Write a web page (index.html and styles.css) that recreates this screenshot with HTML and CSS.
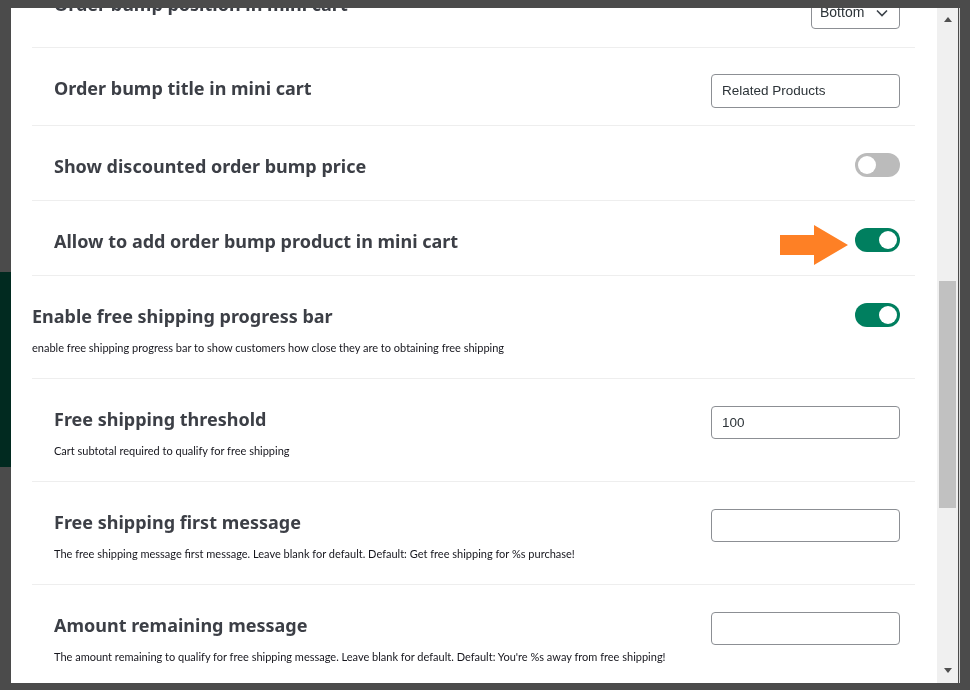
FILE: index.html
```html
<!DOCTYPE html>
<html lang="en">
<head>
<meta charset="utf-8">
<title>Mini cart settings</title>
<link rel="stylesheet" href="styles.css">
</head>
<body>
<div class="modal">
  <div class="modal-body">
    <div class="settings">
      <div class="row row--first">
        <div class="label"><div class="title">Order bump position in mini cart</div></div>
        <div class="control">
          <div class="select">Bottom
            <svg class="chev" width="12" height="8" viewBox="0 0 12 8"><path d="M1 1.5 L6 6.5 L11 1.5" fill="none" stroke="#3c434a" stroke-width="1.6"/></svg>
          </div>
        </div>
      </div>
      <div class="row row--input">
        <div class="label"><div class="title">Order bump title in mini cart</div></div>
        <div class="control"><div class="input input--tall">Related Products</div></div>
      </div>
      <div class="row">
        <div class="label"><div class="title">Show discounted order bump price</div></div>
        <div class="control"><span class="toggle"><span class="knob"></span></span></div>
      </div>
      <div class="row">
        <div class="label"><div class="title">Allow to add order bump product in mini cart</div></div>
        <div class="control">
          <svg class="arrow" width="68" height="40" viewBox="0 0 68 40"><polygon points="0,10 34,10 34,0 68,20 34,40 34,30 0,30" fill="#fe8025"/></svg>
          <span class="toggle toggle--on"><span class="knob"></span></span>
        </div>
      </div>
      <div class="row row--parent">
        <div class="label">
          <div class="title">Enable free shipping progress bar</div>
          <div class="desc">enable free shipping progress bar to show customers how close they are to obtaining free shipping</div>
        </div>
        <div class="control"><span class="toggle toggle--on"><span class="knob"></span></span></div>
      </div>
      <div class="row">
        <div class="label">
          <div class="title">Free shipping threshold</div>
          <div class="desc">Cart subtotal required to qualify for free shipping</div>
        </div>
        <div class="control"><div class="input">100</div></div>
      </div>
      <div class="row">
        <div class="label">
          <div class="title">Free shipping first message</div>
          <div class="desc">The free shipping message first message. Leave blank for default. Default: Get free shipping for %s purchase!</div>
        </div>
        <div class="control"><div class="input"></div></div>
      </div>
      <div class="row">
        <div class="label">
          <div class="title">Amount remaining message</div>
          <div class="desc">The amount remaining to qualify for free shipping message. Leave blank for default. Default: You're %s away from free shipping!</div>
        </div>
        <div class="control"><div class="input"></div></div>
      </div>
    </div>
  </div>
  <div class="scrollbar">
    <span class="sb-up"></span>
    <span class="sb-thumb"></span>
    <span class="sb-down"></span>
  </div>
</div>
</body>
</html>
```
FILE: styles.css
```css
* { box-sizing: border-box; }
html, body { margin: 0; height: 100%; }
body {
  background: linear-gradient(#012a20, #012a20) 0 272px / 11px 195px no-repeat, #4b4b4b;
  overflow: hidden;
  font-family: "Liberation Sans", Arial, sans-serif;
}
.modal {
  position: fixed;
  left: 11px;
  top: 8px;
  width: 947px;
  height: 675px;
  background: #fff;
  display: flex;
  box-shadow: 1px 0 0 #4b4b4b, 2px 0 0 #d8d8d8;
}
.modal-body {
  flex: 1;
  overflow: hidden;
  padding: 0 22px 0 21px;
}
.settings { margin-top: -44px; }
.row {
  display: flex;
  justify-content: space-between;
  align-items: flex-start;
  padding: 28px 15px 22px 22px;
  border-bottom: 1px solid #eeeeee;
}
.row--first { padding-bottom: 31px; }
.row--input { padding-bottom: 25px; }
.row--parent { padding-left: 0; }
.title {
  font-family: "Noto Sans", "Open Sans", sans-serif;
  font-size: 18px;
  line-height: 24px;
  font-weight: bold;
  color: #3c3f46;
}
.desc {
  margin-top: 12px;
  font-family: Lato, "Liberation Sans", sans-serif;
  font-size: 11px;
  line-height: 16px;
  color: #16161d;
}
.control {
  height: 24px;
  display: flex;
  align-items: flex-start;
  gap: 7px;
}
.toggle {
  margin-top: -1px;
  width: 45px;
  height: 24px;
  border-radius: 12px;
  background: #bbbbbb;
  display: flex;
  align-items: center;
  padding: 0 3px;
}
.toggle--on { background: #007f5f; justify-content: flex-end; }
.knob { width: 18px; height: 18px; border-radius: 50%; background: #fff; }
.arrow { margin-top: -4px; }
.input {
  margin-top: -1px;
  width: 189px;
  height: 33px;
  border: 1px solid #8c8f94;
  border-radius: 4px;
  padding: 0 10px;
  font-size: 13.5px;
  line-height: 31px;
  color: #2c3338;
}
.input--tall { margin-top: -2px; height: 34px; line-height: 32px; }
.select {
  margin-top: 4px;
  width: 89px;
  height: 33px;
  border: 1px solid #8c8f94;
  border-radius: 4px;
  padding: 0 0 0 8px;
  font-size: 14px;
  line-height: 31px;
  color: #2c3338;
  display: flex;
  align-items: center;
  gap: 12px;
}
.scrollbar {
  width: 21px;
  background: #f0f0f0;
  display: flex;
  flex-direction: column;
  align-items: center;
}
.sb-up {
  margin-top: 9px;
  border-left: 4.5px solid transparent;
  border-right: 4.5px solid transparent;
  border-bottom: 5px solid #505050;
}
.sb-thumb {
  margin-top: 259px;
  width: 17px;
  height: 227px;
  background: #c1c1c1;
}
.sb-down {
  margin-top: auto;
  margin-bottom: 10px;
  border-left: 4.5px solid transparent;
  border-right: 4.5px solid transparent;
  border-top: 5px solid #505050;
}
```
